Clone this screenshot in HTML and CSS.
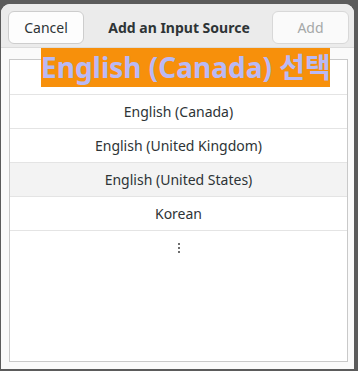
FILE: index.html
```html
<!DOCTYPE html>
<html>
<head>
<meta charset="utf-8">
<link rel="stylesheet" href="styles.css">
</head>
<body>
<div class="dialog">
  <header class="header">
    <button class="btn">Cancel</button>
    <div class="title">Add an Input Source</div>
    <button class="btn btn-disabled">Add</button>
  </header>
  <div class="content">
    <div class="list">
      <div class="row row-first"></div>
      <div class="row">English (Canada)</div>
      <div class="row">English (United Kingdom)</div>
      <div class="row row-hover">English (United States)</div>
      <div class="row">Korean</div>
      <div class="row row-more"><span class="dots"><i></i><i></i><i></i></span></div>
    </div>
  </div>
  <div class="banner">English (Canada) 선택</div>
</div>
</body>
</html>
```
FILE: styles.css
```css
html, body {
  margin: 0;
  padding: 0;
}
body {
  background: #5b5b5b;
  width: 358px;
  height: 371px;
  overflow: hidden;
  font-family: "Noto Sans", "Noto Sans CJK KR", sans-serif;
  color: #2e3436;
}
.dialog {
  position: relative;
  margin: 4px 0 0 1px;
  width: 353px;
  height: 365px;
  background: #fafafa;
  border-radius: 9px 9px 0 0;
  display: flex;
  flex-direction: column;
}
.header {
  height: 36px;
  background: #ebebeb;
  border-bottom: 1px solid #dcdcdc;
  border-radius: 9px 9px 0 0;
  display: flex;
  align-items: flex-start;
  justify-content: space-between;
  padding: 7px 5px 0 7px;
  box-sizing: content-box;
}
.btn {
  height: 33px;
  width: 76px;
  background: #fdfdfd;
  border: 1px solid #cdcdcd;
  border-radius: 6px;
  font-family: inherit;
  font-size: 14px;
  color: #2e3436;
  padding: 0;
}
.btn-disabled {
  width: 77px;
  background: #fafafa;
  color: #a5a8a8;
  border-color: #d8d8d8;
}
.title {
  font-weight: bold;
  font-size: 14px;
  line-height: 33px;
  padding-left: 2px;
}
.content {
  flex: 1;
  padding: 11px 6px 7px 8px;
  display: flex;
}
.list {
  flex: 1;
  background: #fff;
  border: 1px solid #c9c9c9;
}
.row {
  height: 33px;
  border-bottom: 1px solid #e4e4e4;
  display: flex;
  align-items: center;
  justify-content: center;
  font-size: 14px;
}
.row-first {
  height: 34px;
}
.row-hover {
  background: #f3f3f3;
}
.row-more {
  border-bottom: none;
}
.dots {
  display: flex;
  flex-direction: column;
  gap: 2px;
}
.dots i {
  display: block;
  width: 2px;
  height: 2px;
  background: #6e6e6e;
}
.banner {
  position: absolute;
  left: 40px;
  top: 44px;
  width: 289px;
  height: 39px;
  background: #f7900b;
  color: #b9b9f5;
  font-weight: bold;
  font-size: 28px;
  line-height: 39px;
  text-align: center;
  white-space: nowrap;
}
```
